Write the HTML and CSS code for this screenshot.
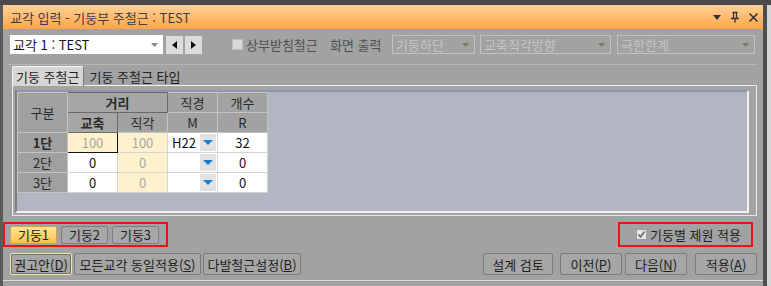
FILE: index.html
```html
<!DOCTYPE html>
<html lang="ko">
<head>
<meta charset="utf-8">
<link rel="stylesheet" href="styles.css">
</head>
<body>
<div class="frame">
  <div class="lborder"></div>
  <div class="window">
    <div class="titlebar">
      <span class="title">교각 입력 - 기둥부 주철근 : TEST</span>
      <span class="ticons">
        <svg width="10" height="8" viewBox="0 0 10 8"><path d="M1 2 H9 L5 7 Z" fill="#333"/></svg>
        <svg width="10" height="12" viewBox="0 0 10 12"><path d="M2.5 1.5 H7.5 M3.5 1.5 V7 M6.5 1.5 V7 M1 7.5 H9 M5 7.5 V11.5" stroke="#333" stroke-width="1.3" fill="none"/></svg>
        <svg width="11" height="11" viewBox="0 0 11 11"><path d="M1.5 1.5 L9.5 9.5 M9.5 1.5 L1.5 9.5" stroke="#333" stroke-width="1.6"/></svg>
      </span>
    </div>

    <div class="toolbar">
      <div class="combo main">
        <span>교각 1 : TEST</span>
        <svg class="carr" width="7" height="4" viewBox="0 0 7 4"><path d="M0 0 H7 L3.5 4 Z" fill="#888"/></svg>
      </div>
      <div class="navbtn"><svg width="5" height="8" viewBox="0 0 5 8"><path d="M5 0 V8 L0 4 Z" fill="#111"/></svg></div>
      <div class="navbtn"><svg width="5" height="8" viewBox="0 0 5 8"><path d="M0 0 V8 L5 4 Z" fill="#111"/></svg></div>
      <label class="chk muted"><span class="box"></span>상부받침철근</label>
      <span class="lbl">화면 출력</span>
      <div class="combo dis w1"><span>기둥하단</span><svg class="carr" width="7" height="4" viewBox="0 0 7 4"><path d="M0 0 H7 L3.5 4 Z" fill="#7c7c5c"/></svg></div>
      <div class="combo dis w2"><span>교축직각방향</span><svg class="carr" width="7" height="4" viewBox="0 0 7 4"><path d="M0 0 H7 L3.5 4 Z" fill="#7c7c5c"/></svg></div>
      <div class="combo dis w3"><span>극한한계</span><svg class="carr" width="7" height="4" viewBox="0 0 7 4"><path d="M0 0 H7 L3.5 4 Z" fill="#7c7c5c"/></svg></div>
    </div>

    <div class="sep"></div>

    <div class="tabs">
      <div class="tab active">기둥 주철근</div>
      <div class="tab">기둥 주철근 타입</div>
    </div>

    <div class="panel">
      <div class="gridarea">
        <table class="grid">
          <tr>
            <th rowspan="2" class="rh">구분</th>
            <th colspan="2" class="hl">거리</th>
            <th>직경</th>
            <th>개수</th>
          </tr>
          <tr>
            <th class="hl">교축</th>
            <th>직각</th>
            <th>M</th>
            <th>R</th>
          </tr>
          <tr>
            <th class="rh hlr">1단</th>
            <td class="yel sel">100</td>
            <td class="yel gray">100</td>
            <td class="dd"><span class="ddv">H22</span><span class="ddb"><svg width="10" height="5" viewBox="0 0 10 5"><path d="M0 0 H10 L5 5 Z" fill="#1a7ad0"/></svg></span></td>
            <td>32</td>
          </tr>
          <tr>
            <th class="rh">2단</th>
            <td>0</td>
            <td class="yel gray">0</td>
            <td class="dd"><span class="ddv"></span><span class="ddb"><svg width="10" height="5" viewBox="0 0 10 5"><path d="M0 0 H10 L5 5 Z" fill="#1a7ad0"/></svg></span></td>
            <td>0</td>
          </tr>
          <tr>
            <th class="rh">3단</th>
            <td>0</td>
            <td class="yel gray">0</td>
            <td class="dd"><span class="ddv"></span><span class="ddb"><svg width="10" height="5" viewBox="0 0 10 5"><path d="M0 0 H10 L5 5 Z" fill="#1a7ad0"/></svg></span></td>
            <td>0</td>
          </tr>
        </table>
        <div class="gridempty"></div>
      </div>
    </div>

    <div class="row1">
      <div class="redbox left">
        <div class="ptab on">기둥1</div>
        <div class="ptab">기둥2</div>
        <div class="ptab">기둥3</div>
      </div>
      <div class="redbox right">
        <label class="chk"><span class="box checked"><svg width="9" height="9" viewBox="0 0 9 9"><path d="M1.5 4.5 L3.5 7 L7.5 1.5" stroke="#666" stroke-width="1.6" fill="none"/></svg></span>기둥별 제원 적용</label>
      </div>
    </div>

    <div class="row2">
      <div class="btn focus b1">권고안(<u>D</u>)</div>
      <div class="btn b2">모든교각 동일적용(<u>S</u>)</div>
      <div class="btn b3">다발철근설정(<u>B</u>)</div>
      <div class="spacer"></div>
      <div class="btn b4">설계 검토</div>
      <div class="btn b5">이전(<u>P</u>)</div>
      <div class="btn b5">다음(<u>N</u>)</div>
      <div class="btn b6">적용(<u>A</u>)</div>
    </div>
    <div class="bottomline"></div>
  </div>
  <div class="rborder"></div>
  <div class="outside"></div>
</div>
</body>
</html>
```

FILE: styles.css
```css
* { box-sizing: border-box; }
html, body { margin: 0; padding: 0; }
body {
  width: 771px;
  height: 286px;
  overflow: hidden;
  background: #a2a2a2;
  font-family: "Noto Sans CJK KR", "Liberation Sans", sans-serif;
  font-size: 13px;
  color: #2a2a2a;
}
.frame {
  display: flex;
  height: 286px;
  border-top: 5px solid #4a4a4a;
}
.lborder { width: 3px; background: #5a5a5a; }
.rborder { width: 4px; background: #4e4e4e; }
.outside { flex: 1; background: #d6d6d6; }
.window {
  width: 760px;
  display: flex;
  flex-direction: column;
  background: #a2a2a2;
}
.titlebar {
  height: 24px;
  background: linear-gradient(#ffd199, #ffa548);
  display: flex;
  align-items: center;
  padding-left: 7px;
  padding-right: 4px;
}
.title { color: #3d3d3d; font-size: 13px; }
.ticons { margin-left: auto; display: flex; align-items: center; gap: 8px; }

.toolbar {
  margin-top: 6px;
  height: 19px;
  display: flex;
  align-items: center;
  padding-left: 7px;
}
.combo {
  height: 19px;
  display: flex;
  align-items: center;
  padding-left: 3px;
  padding-right: 5px;
  flex: none;
}
.combo span { flex: 1; white-space: nowrap; overflow: hidden; }
.combo.main { width: 153px; background: #fff; color: #111; }
.navbtn {
  width: 17px;
  height: 18px;
  background: #dcdcdc;
  display: flex;
  align-items: center;
  justify-content: center;
  margin-left: 3px;
  flex: none;
}
.navbtn + .navbtn { margin-left: 2px; }
.chk { display: flex; align-items: center; white-space: nowrap; }
.toolbar .chk { margin-left: 30px; width: 86px; }
.muted { color: #505050; }
.box {
  width: 11px;
  height: 11px;
  border: 1px solid #bdbdbd;
  background: #d9d9d9;
  margin-right: 3px;
  display: flex;
  align-items: center;
  justify-content: center;
  flex: none;
}
.box.checked { background: #e6e6e6; border-color: #9a9a9a; }
.lbl { margin-left: 12px; width: 52px; color: #505050; white-space: nowrap; }
.combo.dis { border: 1px solid #c2c2c2; color: #c4c4c4; }
.combo.w1 { width: 83px; margin-left: 10px; }
.combo.w2 { width: 131px; margin-left: 5px; }
.combo.w3 { width: 138px; margin-left: 6px; }

.sep {
  margin: 10px 6px 0 5px;
  height: 1px;
  background: #b6b6b6;
}

.tabs {
  margin-top: 1px;
  margin-left: 9px;
  height: 19px;
  display: flex;
  align-items: flex-end;
}
.tab {
  height: 17px;
  padding: 0 6px 0 5px;
  display: flex;
  align-items: center;
  white-space: nowrap;
  color: #1e1e1e;
}
.tab.active {
  height: 20px;
  margin-bottom: -1px;
  background: #d6d6d6;
  border-top: 1px solid #f4f4f4;
  border-left: 1px solid #f4f4f4;
  border-right: 1px solid #7a7a7a;
  border-top-left-radius: 2px;
  border-top-right-radius: 2px;
  padding: 0 4px 0 3px;
  position: relative;
  z-index: 1;
}
.panel {
  margin-left: 9px;
  width: 745px;
  height: 131px;
  border-top: 1px solid #f0f0f0;
  border-left: 1px solid #f0f0f0;
  border-right: 1px solid #ececec;
  border-bottom: 1px solid #e6e6e6;
  background: #a4a4a4;
  padding: 4px 7px 2px 2px;
}
.gridarea {
  height: 100%;
  display: flex;
  border-top: 2px solid #8f93ad;
  border-left: 2px solid #7e7e7e;
  border-right: 2px solid #f4f4f4;
  border-bottom: 2px solid #f0f0f0;
  background: #b2b5c2;
}
.grid {
  border-collapse: collapse;
  table-layout: fixed;
  align-self: flex-start;
}
.grid th, .grid td {
  width: 50px;
  height: 20px;
  padding: 0;
  text-align: center;
  font-weight: normal;
  font-size: 13px;
  white-space: nowrap;
}
.grid th {
  background: #a2a2a2;
  border: 1px solid #c4c4c4;
  color: #2a2a2a;
}
.grid th.rh { background: #a0a0a0; }
.grid th.hl { font-weight: bold; border: 1px solid #6a6a6a; background: #a6a6a6; }
.grid th.hlr { font-weight: bold; }
.grid td {
  background: #ffffff;
  border: 1px solid #d4d4d4;
  color: #111;
}
.grid td.yel { background: #fff1cc; }
.grid td.gray { color: #a8a8a8; }
.grid td.sel { border: 1px solid #111; color: #a8a8a8; }
.grid td.dd { text-align: left; }
.dd { position: relative; }
.ddv { display: inline-block; padding-left: 4px; }
.ddb {
  position: absolute;
  right: 1px;
  top: 1px;
  bottom: 1px;
  width: 16px;
  background: #e2e2e2;
  display: flex;
  align-items: center;
  justify-content: center;
}
.gridempty { flex: 1; }

.row1 {
  margin-top: 6px;
  height: 25px;
  display: flex;
  justify-content: space-between;
}
.redbox {
  border: 2px solid #e81414;
  display: flex;
  align-items: center;
}
.redbox.left { width: 165px; padding-left: 5px; gap: 4px; }
.redbox.right { width: 135px; margin-right: 10px; padding-left: 16px; }
.ptab {
  width: 47px;
  height: 18px;
  border: 1px solid #7e7e7e;
  border-radius: 2px;
  background: #a8a8a8;
  display: flex;
  align-items: center;
  justify-content: center;
  color: #222;
}
.ptab.on {
  background: linear-gradient(#ffe594, #ffc04e);
  border-color: #d9a24a;
}
.redbox.right .chk { color: #1e1e1e; }

.row2 {
  margin-top: 6px;
  height: 22px;
  display: flex;
  padding-left: 7px;
  padding-right: 6px;
}
.btn {
  height: 22px;
  border: 1px solid #7a7a7a;
  border-radius: 2px;
  background: #a6a6a6;
  display: flex;
  align-items: center;
  justify-content: center;
  white-space: nowrap;
  color: #1e1e1e;
  margin-right: 2px;
  flex: none;
}
.btn u { text-underline-offset: 1px; }
.btn.focus { border: 1px solid #f3e9a6; box-shadow: inset 0 0 0 1px #6e6e6e; }
.b1 { width: 62px; }
.b2 { width: 127px; }
.b3 { width: 98px; }
.spacer { flex: 1; }
.b4 { width: 70px; margin-right: 7px; }
.b5 { width: 62px; margin-right: 3px; }
.b6 { width: 62px; margin-left: 5px; margin-right: 0; }
.bottomline {
  margin-top: 5px;
  height: 1px;
  background: #dcdcdc;
}
```
